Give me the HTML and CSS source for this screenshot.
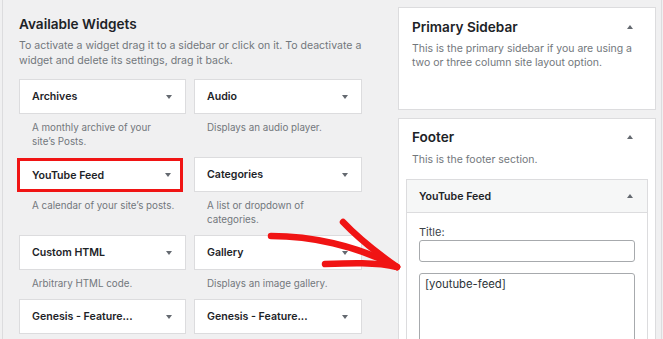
FILE: index.html
```html
<!DOCTYPE html>
<html>
<head>
<meta charset="utf-8">
<link rel="stylesheet" href="styles.css">
</head>
<body>
<div class="page">
  <section class="available">
    <h2 class="heading">Available Widgets</h2>
    <p class="intro">To activate a widget drag it to a sidebar or click on it. To deactivate a<br>widget and delete its settings, drag it back.</p>
    <div class="grid">
      <div class="cell">
        <div class="wbox"><span class="wtitle">Archives</span><i class="down"></i></div>
        <p class="wdesc">A monthly archive of your<br>site’s Posts.</p>
      </div>
      <div class="cell">
        <div class="wbox"><span class="wtitle">Audio</span><i class="down"></i></div>
        <p class="wdesc">Displays an audio player.</p>
      </div>
      <div class="cell">
        <div class="wbox highlight"><span class="wtitle">YouTube Feed</span><i class="down"></i></div>
        <p class="wdesc">A calendar of your site’s posts.</p>
      </div>
      <div class="cell">
        <div class="wbox"><span class="wtitle">Categories</span><i class="down"></i></div>
        <p class="wdesc">A list or dropdown of<br>categories.</p>
      </div>
      <div class="cell">
        <div class="wbox"><span class="wtitle">Custom HTML</span><i class="down"></i></div>
        <p class="wdesc">Arbitrary HTML code.</p>
      </div>
      <div class="cell">
        <div class="wbox"><span class="wtitle">Gallery</span><i class="down"></i></div>
        <p class="wdesc">Displays an image gallery.</p>
      </div>
      <div class="cell">
        <div class="wbox"><span class="wtitle">Genesis - Feature...</span><i class="down"></i></div>
      </div>
      <div class="cell">
        <div class="wbox"><span class="wtitle">Genesis - Feature...</span><i class="down"></i></div>
      </div>
    </div>
  </section>

  <section class="sidebars">
    <div class="panel primary">
      <div class="ptitle"><span>Primary Sidebar</span><i class="up"></i></div>
      <p class="pdesc">This is the primary sidebar if you are using a<br>two or three column site layout option.</p>
    </div>
    <div class="panel footer">
      <div class="ptitle"><span>Footer</span><i class="up"></i></div>
      <p class="pdesc">This is the footer section.</p>
      <div class="inwidget">
        <div class="inhead"><span>YouTube Feed</span><i class="up"></i></div>
        <div class="inbody">
          <div class="label">Title:</div>
          <div class="field"></div>
          <div class="area">[youtube-feed]</div>
        </div>
      </div>
    </div>
  </section>

  <div class="edge"></div>

  <svg class="annot" width="663" height="339" viewBox="0 0 663 339">
    <g fill="none" stroke="#f01414" stroke-width="6.5" stroke-linecap="round" stroke-linejoin="round">
      <path d="M271,236 C310,236 356,245 397,267"/>
      <path d="M343,222 C360,240 380,255 397,267"/>
      <path d="M325,264 C350,263 376,262 397,267"/>
    </g>
  </svg>
</div>
</body>
</html>
```

FILE: styles.css
```css
* { box-sizing: border-box; }

html, body {
  margin: 0;
  padding: 0;
  background: #f0f0f1;
}

body {
  font-family: Inter, "Liberation Sans", sans-serif;
  color: #1d2327;
  width: 663px;
  height: 339px;
  overflow: hidden;
}

.page {
  position: relative;
  display: flex;
  width: 663px;
  height: 339px;
  overflow: hidden;
}

.available {
  flex-shrink: 0;
  width: 360px;
  margin-left: 2px;
  border-left: 1px solid #dcdcde;
  padding: 15px 0 0 16px;
}

.heading {
  margin: 0 0 5px;
  font-size: 13.6px;
  line-height: 18px;
  font-weight: 600;
  color: #1d2327;
}

.intro {
  margin: 0 0 11px;
  font-size: 10.55px;
  line-height: 15px;
  color: #72777c;
  white-space: nowrap;
}

.grid {
  display: grid;
  grid-template-columns: 167px 168px;
  column-gap: 8px;
  align-items: start;
}

.wbox {
  display: flex;
  align-items: center;
  justify-content: space-between;
  height: 35px;
  background: #fff;
  border: 1px solid #dcdcde;
  padding: 0 13px 0 12px;
}

.wbox.highlight {
  height: 34px;
  margin: 1px 3px 0 -2px;
  border: 3px solid #f01414;
  padding: 0 9px 0 12px;
}

.wtitle {
  font-size: 10.6px;
  font-weight: 600;
  color: #1d2327;
}

.down {
  display: block;
  width: 0;
  height: 0;
  border-left: 3px solid transparent;
  border-right: 3px solid transparent;
  border-top: 4px solid #646970;
}

.up {
  display: block;
  width: 0;
  height: 0;
  border-left: 3px solid transparent;
  border-right: 3px solid transparent;
  border-bottom: 4px solid #646970;
}

.wdesc {
  margin: 7px 0 8px;
  padding-left: 13px;
  font-size: 9.8px;
  line-height: 14px;
  color: #72777c;
}

.sidebars {
  flex-shrink: 0;
  width: 258px;
  margin-left: 36px;
  padding-top: 7px;
}

.panel {
  background: #fff;
  border: 1px solid #dcdcde;
}

.primary {
  height: 103px;
  padding: 10px 13px 0;
}

.footer {
  margin-top: 8px;
  height: 240px;
  padding: 9px 7px 0;
}

.footer .ptitle,
.footer .pdesc {
  padding: 0 6px;
}

.ptitle {
  display: flex;
  align-items: center;
  justify-content: space-between;
  font-size: 13.6px;
  line-height: 18px;
  font-weight: 600;
  color: #1d2327;
}

.ptitle .up {
  margin-right: 9px;
}

.pdesc {
  margin: 6px 0 0;
  font-size: 10.5px;
  line-height: 14px;
  color: #72777c;
  white-space: nowrap;
}

.footer .pdesc {
  margin-top: 7px;
}

.inwidget {
  margin-top: 12px;
  border: 1px solid #dcdcde;
  background: #fff;
  height: 200px;
}

.inhead {
  display: flex;
  align-items: center;
  justify-content: space-between;
  height: 33px;
  padding: 0 12px;
  background: #f6f7f7;
  border-bottom: 1px solid #dcdcde;
  font-size: 10.6px;
  font-weight: 600;
  color: #1d2327;
}

.inhead .up {
  margin-right: 2px;
}

.inbody {
  padding: 12px 12px 0;
}

.label {
  font-size: 11px;
  line-height: 14px;
  color: #3c434a;
}

.field {
  margin-top: 1px;
  height: 22px;
  border: 1px solid #a7aaad;
  border-radius: 3px;
  background: #fff;
}

.area {
  margin-top: 11px;
  height: 100px;
  border: 1px solid #a7aaad;
  border-radius: 3px;
  background: #fff;
  padding: 3px 5px;
  font-size: 11.3px;
  line-height: 14px;
  color: #2c3338;
}

.edge {
  flex-shrink: 0;
  width: 2px;
  margin-left: 5px;
  border-left: 1px solid #dcdcde;
}

.annot {
  position: absolute;
  left: 0;
  top: 0;
  pointer-events: none;
}
```
